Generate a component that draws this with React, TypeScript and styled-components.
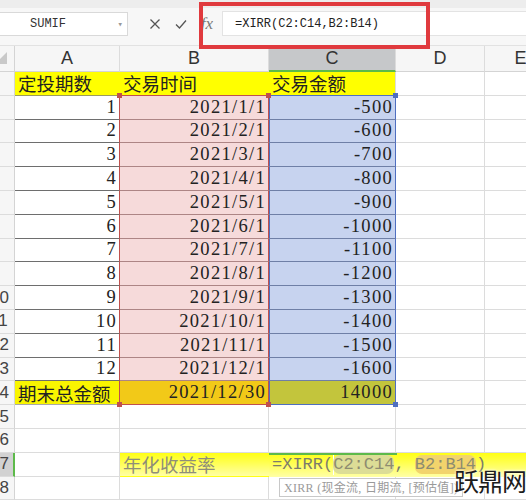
import React from "react";
import styled, { createGlobalStyle, css } from "styled-components";

const RANGE_RED = "#c0504d";
const RANGE_BLUE = "#4f6fc0";
const GRID = "#dcdcdc";
const YELLOW = "#ffff00";

const GlobalStyle = createGlobalStyle`
  * { box-sizing: border-box; }
  html, body { margin: 0; padding: 0; background: #fff; }
  body {
    width: 526px;
    height: 500px;
    overflow: hidden;
    font-family: "Liberation Sans", "Noto Sans CJK SC", sans-serif;
  }
`;

const Screen = styled.div`
  position: relative;
  width: 526px;
  height: 500px;
  overflow: hidden;
  background: #fff;
`;

const FormulaBar = styled.div`
  position: relative;
  height: 46px;
  display: flex;
  align-items: flex-start;
  padding-top: 11px;
  background: linear-gradient(#ededed 0 8px, #f7f7f7 8px);
  border-bottom: 1px solid #e2e2e2;
`;

const NameBox = styled.div`
  margin-left: -2px;
  margin-top: 1px;
  width: 130px;
  height: 24px;
  display: flex;
  align-items: center;
  justify-content: space-between;
  padding: 0 4px 0 31px;
  background: #fff;
  border: 1px solid #d9d9d9;
  font-family: "Liberation Mono", monospace;
  font-size: 12px;
  color: #333;
`;

const Caret = styled.span`
  font-size: 9px;
  color: #999;
`;

const ToolIcons = styled.div`
  display: flex;
  margin-left: 14px;
  height: 25px;
  align-items: center;
`;

const ToolIcon = styled.span`
  width: 26px;
  display: flex;
  justify-content: center;
  align-items: center;
  color: #555;
`;

const Fx = styled(ToolIcon)`
  font-family: "Liberation Serif", serif;
  font-style: italic;
  font-size: 17px;
  color: #777;
`;

const FormulaInput = styled.div`
  flex: 1;
  height: 25px;
  margin-left: 2px;
  display: flex;
  align-items: center;
  padding-left: 12px;
  background: #fff;
  border: 1px solid #e3e3e3;
  border-right: none;
  font-family: "Liberation Mono", monospace;
  font-size: 12px;
  color: #222;
`;

const Callout = styled.div`
  position: absolute;
  left: 199px;
  top: 2px;
  width: 231px;
  height: 47px;
  border: 4px solid #e03a3e;
  z-index: 5;
`;

const Sheet = styled.div`
  display: grid;
  grid-template-columns: 15px 105px 149px 127px 89px 72px;
  grid-template-rows: 26px;
  grid-auto-rows: 23.8px;
  width: 557px;
`;

const Corner = styled.div`
  display: flex;
  justify-content: flex-end;
  align-items: flex-end;
  padding: 0 7px 7px 0;
  background: #f6f6f6;
  border-right: 1px solid #d4d4d4;
  border-bottom: 1px solid #d4d4d4;
  overflow: hidden;
`;

const Triangle = styled.span`
  flex: none;
  width: 0;
  height: 0;
  border-left: 12px solid transparent;
  border-bottom: 12px solid #c9c9c9;
`;

const ColHead = styled.div<{ $active?: boolean }>`
  display: flex;
  align-items: center;
  justify-content: center;
  background: ${(p) => (p.$active ? "#c6c8ca" : "#f6f6f6")};
  border-right: 1px solid ${GRID};
  border-bottom: ${(p) => (p.$active ? "2px solid #5dba4a" : "1px solid #d4d4d4")};
  font-size: 18px;
  color: #333;
`;

const RowHead = styled.div<{ $active?: boolean }>`
  display: flex;
  align-items: center;
  overflow: hidden;
  background: ${(p) => (p.$active ? "#d2d2d2" : "#f6f6f6")};
  border-right: ${(p) => (p.$active ? "2px solid #5dba4a" : "1px solid #d4d4d4")};
  border-bottom: 1px solid ${GRID};
  font-size: 17px;
  color: #444;
  white-space: nowrap;
`;

const RowLabel = styled.span`
  margin-left: -10px;
`;

type CellProps = {
  $bg?: string;
  $align?: "left" | "right";
  $b?: string;
  $r?: string;
  $l?: string;
  $num?: boolean;
  $color?: string;
};

const Cell = styled.div<CellProps>`
  position: relative;
  min-width: 0;
  display: flex;
  align-items: center;
  justify-content: ${(p) => (p.$align === "right" ? "flex-end" : "flex-start")};
  padding: ${(p) => (p.$align === "right" ? "0 2px 0 0" : "0 0 0 3px")};
  background: ${(p) => p.$bg ?? "#fff"};
  border-right: 1px solid ${(p) => p.$r ?? GRID};
  border-bottom: 1px solid ${(p) => p.$b ?? GRID};
  font-family: "Liberation Serif", "Noto Sans CJK SC", serif;
  font-size: 18.5px;
  color: ${(p) => p.$color ?? "#222"};
  white-space: nowrap;
  ${(p) =>
    p.$l &&
    css`
      box-shadow: inset 1px 0 0 ${p.$l};
    `}
  ${(p) =>
    p.$num &&
    css`
      letter-spacing: 1.3px;
    `}
`;

const Handle = styled.span<{ $color: string; $x: "left" | "right"; $y: "top" | "bottom" }>`
  position: absolute;
  width: 5px;
  height: 5px;
  background: ${(p) => p.$color};
  ${(p) => p.$x}: -3px;
  ${(p) => p.$y}: -3px;
  z-index: 2;
`;

const EditCell = styled.div`
  position: relative;
  grid-column: span 3;
  display: flex;
  align-items: center;
  padding-left: 3px;
  background: linear-gradient(#ffff14, #ffffa6);
  font-family: "Liberation Mono", monospace;
  font-size: 17px;
  color: #7c7c6c;
  white-space: pre;

  &::before {
    content: "";
    position: absolute;
    left: 0;
    top: 0;
    width: 128px;
    height: 2px;
    background: #5dba4a;
  }
`;

const FormulaText = styled.span`
  white-space: pre;
`;

const Ref = styled.span<{ $tone: "c" | "b" }>`
  border-radius: 7px;
  background: ${(p) => (p.$tone === "c" ? "#dcdd96" : "#f2d46c")};
  color: #8e8c70;
`;

const Caretline = styled.span`
  display: inline-block;
  width: 1px;
  height: 20px;
  margin: 0 -1px 0 0;
  background: #fff;
  vertical-align: middle;
`;

const Tooltip = styled.div`
  position: absolute;
  left: 10px;
  top: calc(100% + 1px);
  height: 19px;
  display: flex;
  align-items: center;
  padding: 0 4px;
  background: #fff;
  border: 1px solid #c8c8c8;
  font-family: "Liberation Serif", "Noto Sans CJK SC", serif;
  font-size: 12px;
  letter-spacing: 0.3px;
  color: #9a9a9a;
  z-index: 3;
`;

const Watermark = styled.div`
  position: absolute;
  right: 0;
  bottom: 2px;
  font-family: "Noto Sans CJK SC", sans-serif;
  font-size: 25px;
  letter-spacing: -1px;
  color: #1c1c1c;
  text-shadow: 0 0 2px #fff, 0 0 3px #fff;
  z-index: 6;
`;

const rows = Array.from({ length: 12 }, (_, i) => ({
  n: i + 1,
  date: `2021/${i + 1}/1`,
  amount: -(500 + i * 100),
}));

function XIcon() {
  return (
    <svg width="12" height="12" viewBox="0 0 12 12">
      <path d="M1.5 1.5 L10.5 10.5 M10.5 1.5 L1.5 10.5" stroke="#555" strokeWidth="1.3" fill="none" />
    </svg>
  );
}

function CheckIcon() {
  return (
    <svg width="12" height="12" viewBox="0 0 12 12">
      <path d="M1 6.5 L4.5 10 L11 2.5" stroke="#555" strokeWidth="1.3" fill="none" />
    </svg>
  );
}

function Empty({ n, active }: { n: number; active?: boolean }) {
  return (
    <>
      <RowHead $active={active}>
        <RowLabel>{n}</RowLabel>
      </RowHead>
      <Cell />
      <Cell />
      <Cell />
      <Cell />
      <Cell />
    </>
  );
}

export default function App() {
  return (
    <Screen>
      <GlobalStyle />
      <FormulaBar>
        <NameBox>
          <span>SUMIF</span>
          <Caret>▾</Caret>
        </NameBox>
        <ToolIcons>
          <ToolIcon>
            <XIcon />
          </ToolIcon>
          <ToolIcon>
            <CheckIcon />
          </ToolIcon>
          <Fx>fx</Fx>
        </ToolIcons>
        <FormulaInput>=XIRR(C2:C14,B2:B14)</FormulaInput>
        <Callout />
      </FormulaBar>

      <Sheet>
        <Corner>
          <Triangle />
        </Corner>
        <ColHead>A</ColHead>
        <ColHead>B</ColHead>
        <ColHead $active>C</ColHead>
        <ColHead>D</ColHead>
        <ColHead>E</ColHead>

        <RowHead>
          <RowLabel>1</RowLabel>
        </RowHead>
        <Cell $bg={YELLOW} $r={YELLOW} $b="#9a9a60">定投期数</Cell>
        <Cell $bg={YELLOW} $r={YELLOW} $b={RANGE_RED}>交易时间</Cell>
        <Cell $bg={YELLOW} $b={RANGE_BLUE}>交易金额</Cell>
        <Cell />
        <Cell />

        {rows.map((r) => (
          <React.Fragment key={r.n}>
            <RowHead>
              <RowLabel>{r.n + 1}</RowLabel>
            </RowHead>
            <Cell $align="right" $num $b="#6e6e6e" $r={RANGE_RED}>
              {r.n}
            </Cell>
            <Cell $align="right" $num $bg="#f6dada" $b="#ad8585" $r={RANGE_RED}>
              {r.n === 1 && (
                <>
                  <Handle $color={RANGE_RED} $x="left" $y="top" />
                  <Handle $color={RANGE_RED} $x="right" $y="top" />
                </>
              )}
              {r.date}
            </Cell>
            <Cell $align="right" $num $bg="#c7d3ef" $b="#6f7fa6" $r={RANGE_BLUE} $l={RANGE_BLUE}>
              {r.n === 1 && <Handle $color={RANGE_BLUE} $x="right" $y="top" />}
              {r.amount}
            </Cell>
            <Cell />
            <Cell />
          </React.Fragment>
        ))}

        <RowHead>
          <RowLabel>14</RowLabel>
        </RowHead>
        <Cell $bg="#f9f500" $b="#a8a8a8" $r={RANGE_RED}>期末总金额</Cell>
        <Cell $align="right" $num $bg="#f2c918" $b={RANGE_RED} $r={RANGE_RED}>
          <Handle $color={RANGE_RED} $x="left" $y="bottom" />
          <Handle $color={RANGE_RED} $x="right" $y="bottom" />
          2021/12/30
        </Cell>
        <Cell $align="right" $num $bg="#c3c53c" $b={RANGE_BLUE} $r={RANGE_BLUE} $l={RANGE_BLUE}>
          <Handle $color={RANGE_BLUE} $x="right" $y="bottom" />
          14000
        </Cell>
        <Cell />
        <Cell />

        <Empty n={15} />
        <Empty n={16} />

        <RowHead $active>
          <RowLabel>17</RowLabel>
        </RowHead>
        <Cell />
        <Cell $bg="linear-gradient(#ffff14, #ffffa6)" $r="transparent" $b="transparent" $color="#8f8e78">
          年化收益率
        </Cell>
        <EditCell>
          <FormulaText>
            =XIRR(
            <Caretline />
            <Ref $tone="c">C2:C14</Ref>
            {", "}
            <Ref $tone="b">B2:B14</Ref>)
          </FormulaText>
          <Tooltip>XIRR (现金流, 日期流, [预估值])</Tooltip>
        </EditCell>

        <Empty n={18} />
      </Sheet>

      <Watermark>跃鼎网</Watermark>
    </Screen>
  );
}
